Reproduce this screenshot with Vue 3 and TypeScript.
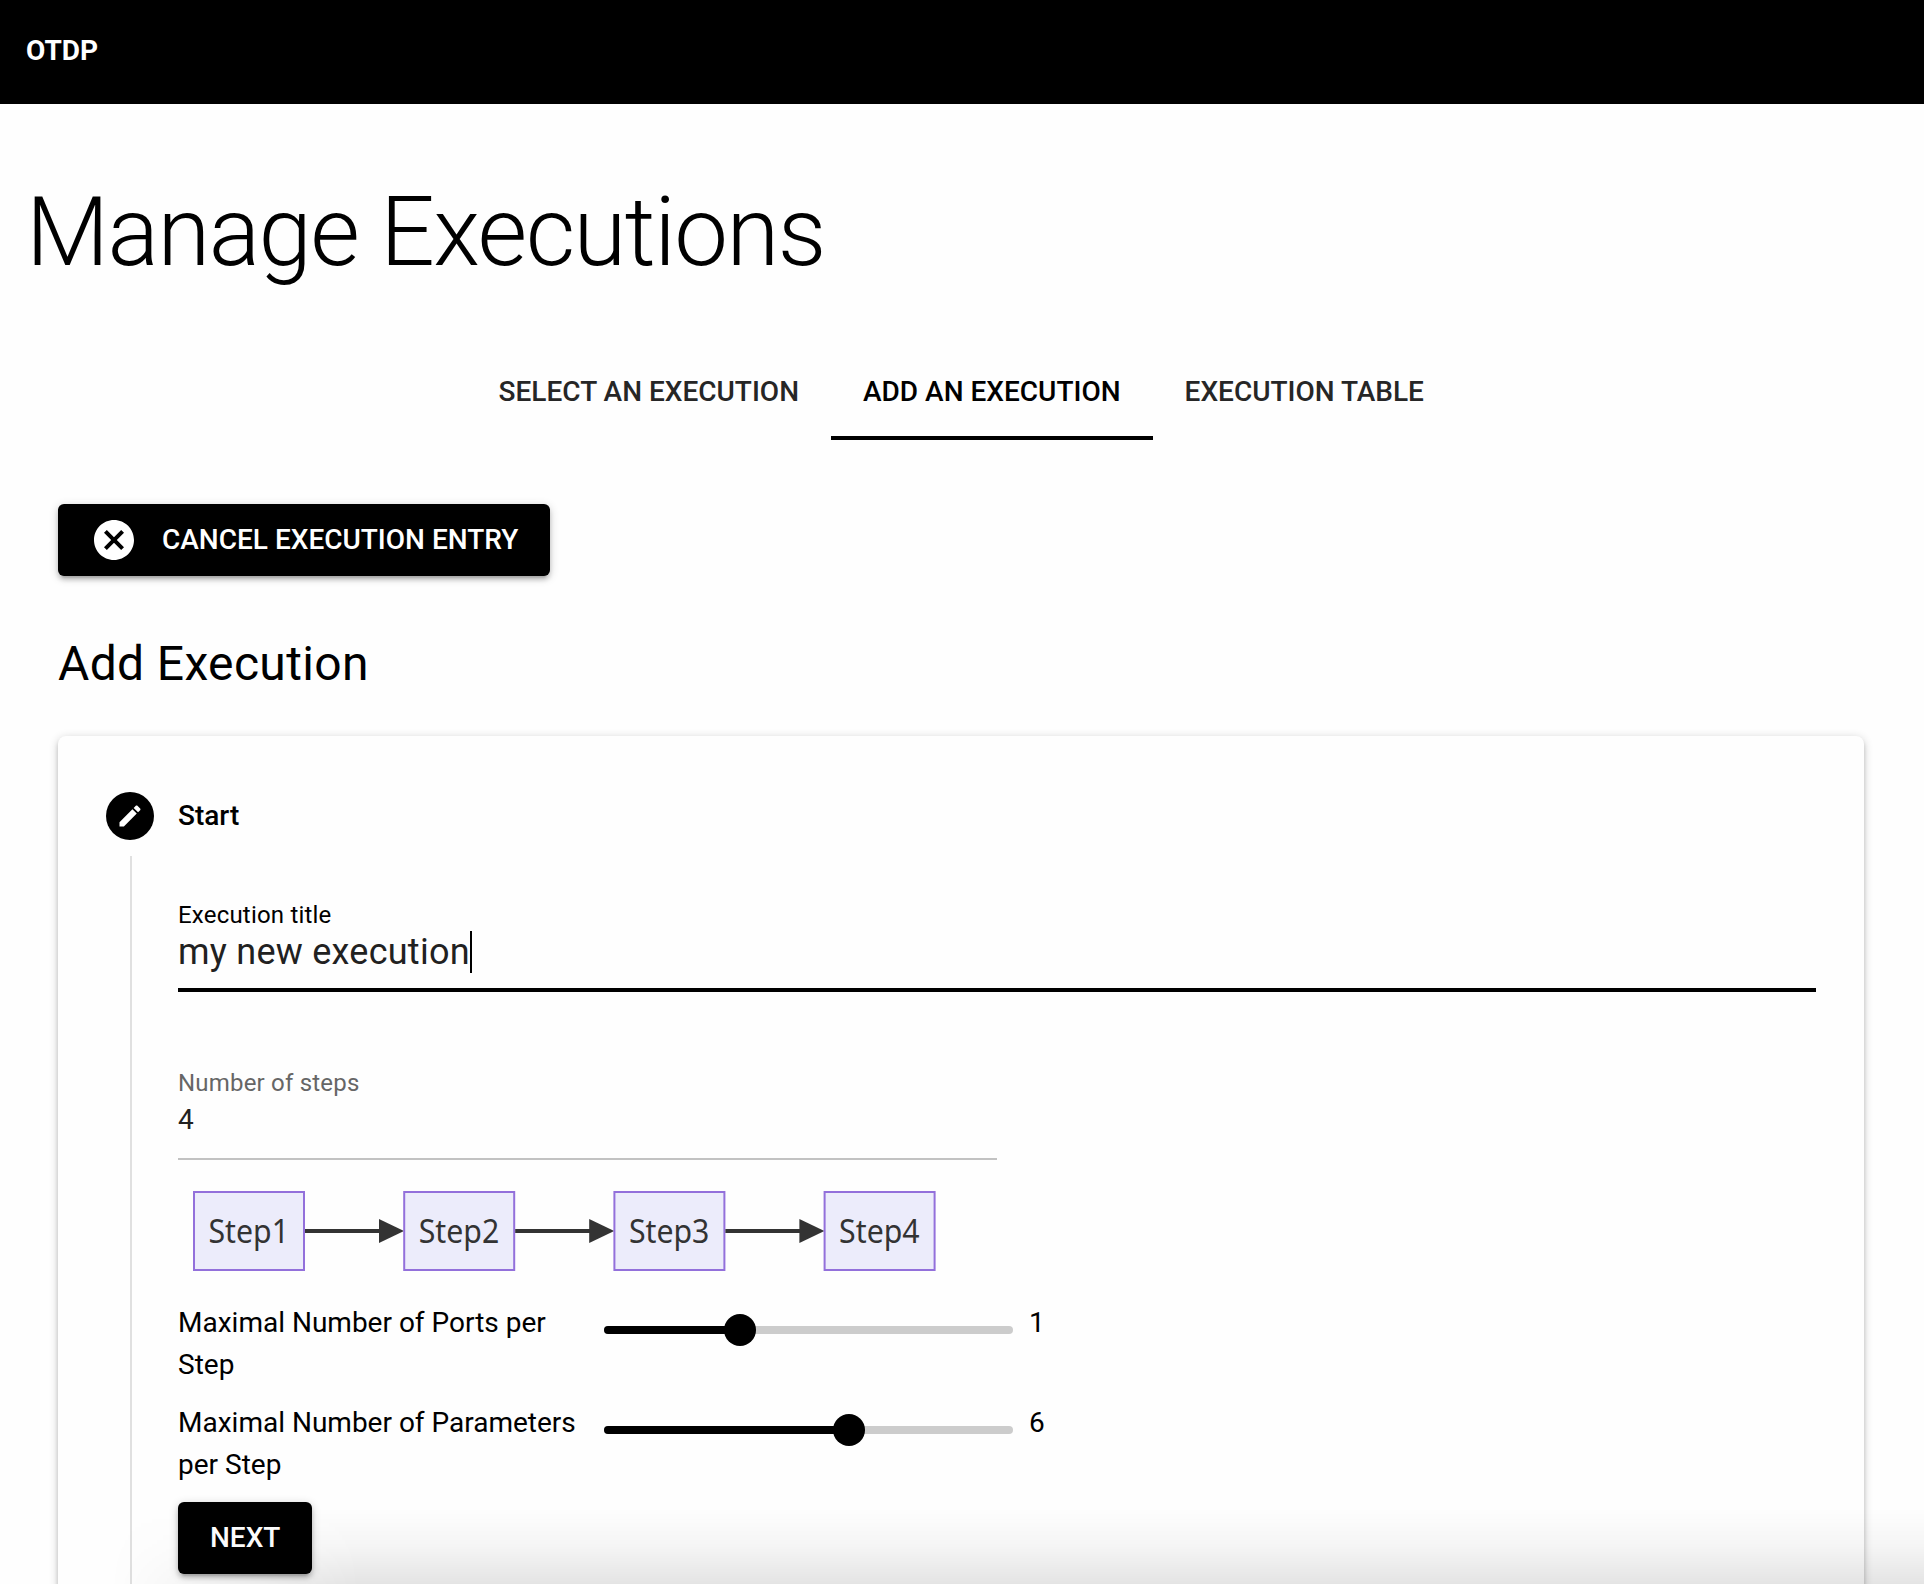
<script setup lang="ts">
import { ref, computed } from 'vue'

interface Slider {
  label: string
  value: number
  max: number
  min: number
}

const tabs: string[] = ['Select an execution', 'Add an execution', 'Execution table']
const activeTab = ref(1)
const title = ref('my new execution')
const stepCount = ref(4)
const steps = computed(() => Array.from({ length: stepCount.value }, (_, i) => i))
const sliders = ref<Slider[]>([
  { label: 'Maximal Number of Ports per Step', value: 1, min: 0, max: 3 },
  { label: 'Maximal Number of Parameters per Step', value: 6, min: 0, max: 10 },
])
const percent = (s: Slider): string => `${((s.value - s.min) / (s.max - s.min)) * 100}%`
</script>

<template>
  <div class="page">
    <header class="toolbar">OTDP</header>
    <h1 class="page-title">Manage Executions</h1>
    <nav class="tabs">
      <button
        v-for="(tab, i) in tabs"
        :key="tab"
        class="tab"
        :class="{ active: i === activeTab }"
        @click="activeTab = i"
      >
        {{ tab }}
      </button>
    </nav>
    <main class="panel">
      <button class="btn cancel">
        <svg class="cancel-icon" viewBox="2 2 20 20">
          <path
            fill="#fff"
            d="M12 2C6.47 2 2 6.47 2 12s4.47 10 10 10 10-4.47 10-10S17.53 2 12 2zm5 13.59L15.59 17 12 13.41 8.41 17 7 15.59 10.59 12 7 8.41 8.41 7 12 10.59 15.59 7 17 8.41 13.41 12 17 15.59z"
          />
        </svg>
        <span>Cancel execution entry</span>
      </button>
      <h2 class="section-title">Add Execution</h2>
      <section class="card">
        <div class="step-head">
          <span class="dot">
            <svg viewBox="0 0 24 24" width="28" height="28">
              <path
                fill="#fff"
                d="M3 17.25V21h3.75L17.81 9.94l-3.75-3.75L3 17.25zM20.71 7.04c.39-.39.39-1.02 0-1.41l-2.34-2.34c-.39-.39-1.02-.39-1.41 0l-1.83 1.83 3.75 3.75 1.83-1.83z"
              />
            </svg>
          </span>
          <span class="step-title">Start</span>
        </div>
        <div class="step-body">
          <div class="rail"></div>
          <div class="content">
            <div class="field focused">
              <div class="label">Execution title</div>
              <div class="value"><span>{{ title }}</span><i class="caret"></i></div>
            </div>
            <div class="field steps">
              <div class="label">Number of steps</div>
              <div class="value">{{ stepCount }}</div>
            </div>
            <svg class="flow" width="819" height="112" viewBox="0 0 819 112">
              <g v-for="i in steps" :key="i" :transform="`translate(${16 + i * 210.2} 0)`">
                <rect x="0" y="16" width="110" height="78" fill="#ECECFB" stroke="#9370DB" stroke-width="2" />
                <text x="14.5" y="66.5" textLength="80.5" lengthAdjust="spacingAndGlyphs">Step{{ i + 1 }}</text>
                <template v-if="i < stepCount - 1">
                  <path d="M111 55H188" stroke="#333" stroke-width="4" />
                  <path d="M185 43L210 55L185 67Z" fill="#333" />
                </template>
              </g>
            </svg>
            <div v-for="s in sliders" :key="s.label" class="slider-row">
              <div class="slider-label">{{ s.label }}</div>
              <div class="track">
                <div class="selection" :style="{ width: percent(s) }"><span class="thumb"></span></div>
              </div>
              <div class="slider-value">{{ s.value }}</div>
            </div>
            <button class="btn next">Next</button>
          </div>
        </div>
      </section>
    </main>
    <div class="bottom-shade"></div>
  </div>
</template>

<style>
body {
  margin: 0;
  overflow: hidden;
}
</style>

<style scoped>
.page {
  position: relative;
  box-sizing: border-box;
  width: 1924px;
  height: 1584px;
  overflow: hidden;
  background: #fefefe;
  color: #000;
  font: 400 28px/42px Roboto, sans-serif;
}
.toolbar {
  box-sizing: border-box;
  height: 104px;
  padding: 30px 26px;
  background: #000;
  color: #fff;
  font-weight: 700;
}
.page-title {
  margin: 80px 0 0;
  padding-left: 26px;
  font-size: 96px;
  font-weight: 300;
  line-height: 96px;
  letter-spacing: -1.55px;
}
.tabs {
  display: flex;
  justify-content: center;
  height: 96px;
  margin-top: 64px;
  padding-right: 1.5px;
}
button {
  border: 0;
  font: 500 28px/48px Roboto, sans-serif;
  text-transform: uppercase;
  white-space: nowrap;
}
.tab {
  padding: 4px 32px 0;
  background: none;
  color: #262626;
  border-bottom: 4px solid transparent;
}
.tab.active {
  color: #000;
  border-bottom-color: #000;
}
.panel {
  padding: 64px 60px 0 58px;
}
.btn {
  display: flex;
  align-items: center;
  height: 72px;
  padding: 0 32px;
  border-radius: 6px;
  background: #000;
  color: #fff;
  box-shadow: 0 2px 10px rgba(0, 0, 0, 0.2), 0 4px 4px rgba(0, 0, 0, 0.14), 0 6px 2px -4px rgba(0, 0, 0, 0.12);
}
.cancel-icon {
  width: 40px;
  height: 40px;
  margin: 0 28px 0 4px;
}
.section-title {
  margin: 56px 0 0;
  font-size: 48px;
  font-weight: 400;
  line-height: 64px;
  letter-spacing: 0.35px;
}
.card {
  box-sizing: border-box;
  height: 1000px;
  margin-top: 40px;
  padding: 32px 48px 0;
  border-radius: 8px;
  background: #fefefe;
  box-shadow: 0 2px 10px rgba(0, 0, 0, 0.2), 0 4px 4px rgba(0, 0, 0, 0.14), 0 6px 2px -4px rgba(0, 0, 0, 0.12);
}
.step-head {
  display: flex;
  align-items: center;
  height: 96px;
  gap: 24px;
}
.dot {
  display: flex;
  align-items: center;
  justify-content: center;
  width: 48px;
  height: 48px;
  border-radius: 50%;
  background: #000;
}
.step-title {
  font-weight: 500;
}
.step-body {
  display: flex;
}
.rail {
  width: 2px;
  height: 900px;
  margin: -8px 46px 0 24px;
  background: #e0e0e0;
}
.content {
  width: 1638px;
}
.field {
  box-sizing: border-box;
  height: 104px;
  padding-top: 12px;
}
.field.focused {
  margin-top: 24px;
  border-bottom: 4px solid #000;
}
.label {
  font-size: 24px;
  line-height: 31px;
  letter-spacing: 0.2px;
}
.focused .value {
  display: flex;
  align-items: center;
  height: 42px;
  font-size: 36px;
  letter-spacing: 0.25px;
  color: #212121;
}
.caret {
  width: 2px;
  height: 42px;
  background: #000;
}
.field.steps {
  width: 819px;
  margin-top: 64px;
  border-bottom: 2px solid #c2c2c2;
}
.steps .label {
  color: #666;
}
.steps .value {
  color: #212121;
}
.flow {
  display: block;
  margin: 16px 0 14px;
}
.flow text {
  font: 32px 'Noto Sans', sans-serif;
  fill: #333;
}
.slider-row {
  display: flex;
  height: 100px;
}
.slider-label {
  width: 410px;
}
.track {
  width: 409px;
  height: 8px;
  margin: 24px 16px 0 16px;
  border-radius: 4px;
  background: #ccc;
}
.selection {
  display: flex;
  align-items: center;
  justify-content: flex-end;
  height: 8px;
  border-radius: 4px;
  background: #000;
}
.thumb {
  flex: none;
  width: 32px;
  height: 32px;
  margin-right: -16px;
  border-radius: 50%;
  background: #000;
}
.bottom-shade {
  position: absolute;
  left: 0;
  right: 0;
  bottom: 0;
  height: 76px;
  pointer-events: none;
  background: linear-gradient(to bottom, transparent, rgba(0, 0, 0, 0.035) 50%, rgba(0, 0, 0, 0.1));
  mask-image: linear-gradient(to right, transparent 110px, #000 360px);
}
</style>
